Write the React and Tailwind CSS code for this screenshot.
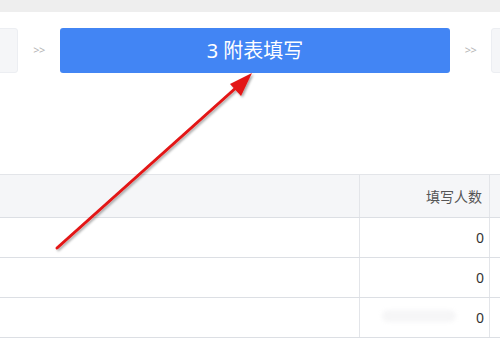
import React from "react";

const rows = [0, 0, 0];

const Chevrons = () => (
  <div className="flex h-full items-center justify-center text-[11px] tracking-[-0.5px] text-[#b5b5b5]">
    &gt;&gt;
  </div>
);

export default function App() {
  return (
    <div
      className="relative h-[340px] w-[500px] overflow-hidden bg-white"
      style={{ fontFamily: '"Noto Sans", "Noto Sans CJK SC", sans-serif' }}
    >
      {/* top strip */}
      <div className="h-[12px] bg-[#eeeeee]" />

      {/* steps */}
      <div className="mt-[16px] flex h-[45px]">
        <div className="-ml-[112px] w-[130px] shrink-0 rounded-[3px] border border-[#eceef2] bg-[#f5f6f8]" />
        <div className="w-[42px] shrink-0">
          <Chevrons />
        </div>
        <div className="flex w-[390px] shrink-0 items-center justify-center rounded-[3px] bg-[#4285f4] text-[20px] text-white">
          3 附表填写
        </div>
        <div className="w-[41px] shrink-0">
          <Chevrons />
        </div>
        <div className="w-[130px] shrink-0 rounded-[3px] border border-[#eceef2] bg-[#f5f6f8]" />
      </div>

      {/* table */}
      <div className="mt-[101px] border-t border-[#e3e5e9]">
        <div className="flex h-[43px] border-b border-[#dcdfe4] bg-[#f5f6f8]">
          <div className="w-[360px] shrink-0 border-r border-[#e3e5e9]" />
          <div className="flex w-[130px] shrink-0 items-center justify-end border-r border-[#e3e5e9] pr-[7px] text-[14px] text-[#555]">
            填写人数
          </div>
          <div className="flex-1" />
        </div>
        {rows.map((v, i) => (
          <div key={i} className="flex h-[40px] border-b border-[#dcdfe4]">
            <div className="w-[360px] shrink-0 border-r border-[#e3e5e9]" />
            <div className="relative flex w-[130px] shrink-0 items-center justify-end border-r border-[#e3e5e9] pr-[5px] text-[14px] text-[#333]">
              {i === 2 && (
                <div className="absolute left-[22px] top-[12px] h-[12px] w-[74px] rounded-full bg-[#f6f6f7] blur-[2px]" />
              )}
              <span className="relative">{v}</span>
            </div>
            <div className="flex-1" />
          </div>
        ))}
      </div>

      {/* annotation arrow */}
      <svg className="pointer-events-none absolute left-0 top-0" width="500" height="340">
        <defs>
          <filter id="sh" x="-20%" y="-20%" width="140%" height="140%">
            <feDropShadow dx="1.5" dy="1.5" stdDeviation="1" floodColor="#000" floodOpacity="0.35" />
          </filter>
        </defs>
        <g filter="url(#sh)">
          <line x1="57" y1="248" x2="238" y2="86" stroke="#e31414" strokeWidth="3" strokeLinecap="round" />
          <polygon points="252,73 230,84 241,96" fill="#e31414" />
        </g>
      </svg>
    </div>
  );
}
